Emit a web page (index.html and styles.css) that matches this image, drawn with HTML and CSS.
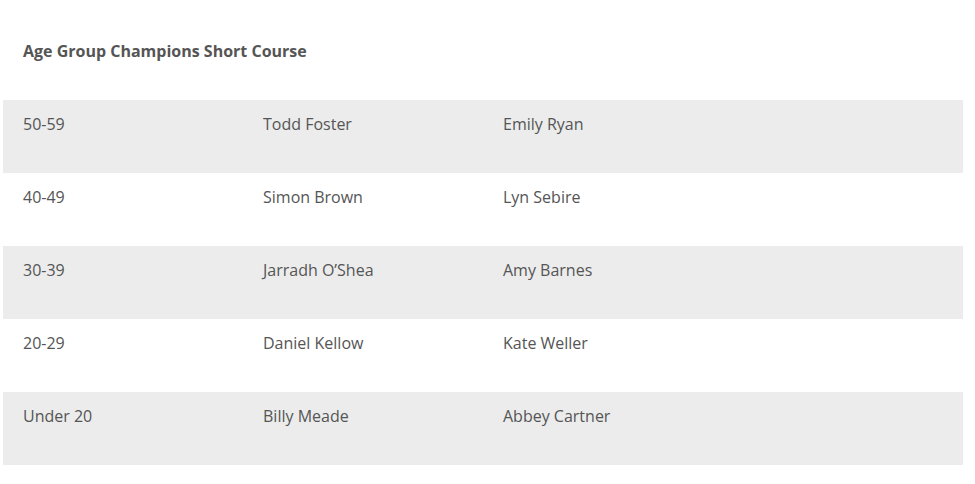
FILE: index.html
```html
<!DOCTYPE html>
<html lang="en">
<head>
<meta charset="utf-8">
<link rel="stylesheet" href="styles.css">
</head>
<body>
<div class="page">
  <h3 class="title">Age Group Champions Short Course</h3>
  <table class="champions">
    <tbody>
      <tr class="shaded"><td>50-59</td><td>Todd Foster</td><td>Emily Ryan</td><td></td></tr>
      <tr><td>40-49</td><td>Simon Brown</td><td>Lyn Sebire</td><td></td></tr>
      <tr class="shaded"><td>30-39</td><td>Jarradh O’Shea</td><td>Amy Barnes</td><td></td></tr>
      <tr><td>20-29</td><td>Daniel Kellow</td><td>Kate Weller</td><td></td></tr>
      <tr class="shaded"><td>Under 20</td><td>Billy Meade</td><td>Abbey Cartner</td><td></td></tr>
    </tbody>
  </table>
</div>
</body>
</html>
```

FILE: styles.css
```css
html, body {
  margin: 0;
  padding: 0;
  background: #ffffff;
}
body {
  font-family: "Open Sans", "Liberation Sans", sans-serif;
  color: #555555;
  font-size: 16px;
}
.page {
  padding: 0 12px 0 3px;
}
.title {
  margin: 0;
  padding: 39px 20px 0 20px;
  height: 100px;
  box-sizing: border-box;
  font-size: 16px;
  font-weight: 700;
  line-height: 24px;
  color: #555555;
}
.champions {
  width: 960px;
  border-collapse: collapse;
  table-layout: fixed;
}
.champions td {
  width: 240px;
  height: 73px;
  box-sizing: border-box;
  padding: 12px 20px 0 20px;
  vertical-align: top;
  line-height: 24px;
}
.champions tr.shaded {
  background: #ececec;
}
```
